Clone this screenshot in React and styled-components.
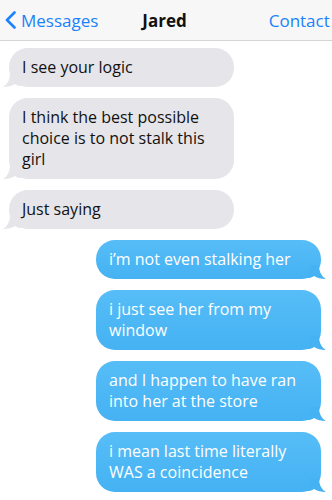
import React from "react";
import styled, { createGlobalStyle } from "styled-components";

const Global = createGlobalStyle`
  html, body { margin: 0; padding: 0; background: #ffffff; }
  body { font-family: "Open Sans", "Noto Sans", sans-serif; overflow: hidden; }
  * { box-sizing: border-box; }
`;

const Screen = styled.div`
  width: 332px;
  height: 500px;
  overflow: hidden;
  display: flex;
  flex-direction: column;
`;

const NavBar = styled.header`
  height: 41px;
  flex: none;
  background: #f7f7f7;
  border-bottom: 1px solid #d4d4d6;
  display: grid;
  grid-template-columns: 1fr auto 1fr;
  align-items: center;
  font-size: 17px;
  white-space: nowrap;
  overflow: hidden;
`;

const BackButton = styled.div`
  display: flex;
  align-items: center;
  gap: 5px;
  padding-left: 5px;
  color: #1a82fb;
  svg { flex: none; }
`;

const Title = styled.div`
  font-weight: 700;
  color: #111;
  margin-left: -3px;
`;

const Action = styled.div`
  justify-self: start;
  padding-left: 82px;
  color: #1a82fb;
`;

const Thread = styled.main`
  display: flex;
  flex-direction: column;
  gap: 11px;
  padding: 7px 11px 0 9px;
`;

const Bubble = styled.div`
  position: relative;
  width: 225px;
  align-self: ${(p) => (p.$mine ? "flex-end" : "flex-start")};
  padding: 9px 13px;
  border-radius: 19px;
  font-size: 16px;
  line-height: 21px;
  color: ${(p) => (p.$mine ? "#ffffff" : "#111111")};
  background: ${(p) =>
    p.$mine ? "linear-gradient(#56bdf7, #45b2f3)" : "#e5e5ea"};
`;

const Tail = styled.svg`
  position: absolute;
  bottom: 0;
  ${(p) => (p.$mine ? "right: -5px;" : "left: -6px;")}
  width: 18px;
  height: 14px;
`;

const BubbleTail = ({ mine }) => (
  <Tail $mine={mine} viewBox="0 0 18 14">
    {mine ? (
      <path
        d="M2 0 H11 C11 6 13 11 18 14 C13 14 9 13 6 11 C4 12.5 2 13 0 13 Z"
        fill="#45b2f3"
      />
    ) : (
      <path
        d="M16 0 H7 C7 6 5 11 0 14 C5 14 9 13 12 11 C14 12.5 16 13 18 13 Z"
        fill="#e5e5ea"
      />
    )}
  </Tail>
);

const messages = [
  { mine: false, text: "I see your logic" },
  { mine: false, text: "I think the best possible choice is to not stalk this girl" },
  { mine: false, text: "Just saying" },
  { mine: true, text: "i’m not even stalking her" },
  { mine: true, text: "i just see her from my window" },
  { mine: true, text: "and I happen to have ran into her at the store" },
  { mine: true, text: "i mean last time literally WAS a coincidence" },
];

export default function App() {
  return (
    <Screen>
      <Global />
      <NavBar>
        <BackButton>
          <svg width="11" height="18" viewBox="0 0 11 18">
            <path
              d="M9.5 1.5 L2 9 L9.5 16.5"
              fill="none"
              stroke="#1a82fb"
              strokeWidth="2.6"
              strokeLinecap="round"
              strokeLinejoin="round"
            />
          </svg>
          <span>Messages</span>
        </BackButton>
        <Title>Jared</Title>
        <Action>Contact</Action>
      </NavBar>
      <Thread>
        {messages.map((m, i) => (
          <Bubble key={i} $mine={m.mine}>
            <BubbleTail mine={m.mine} />
            {m.text}
          </Bubble>
        ))}
      </Thread>
    </Screen>
  );
}
